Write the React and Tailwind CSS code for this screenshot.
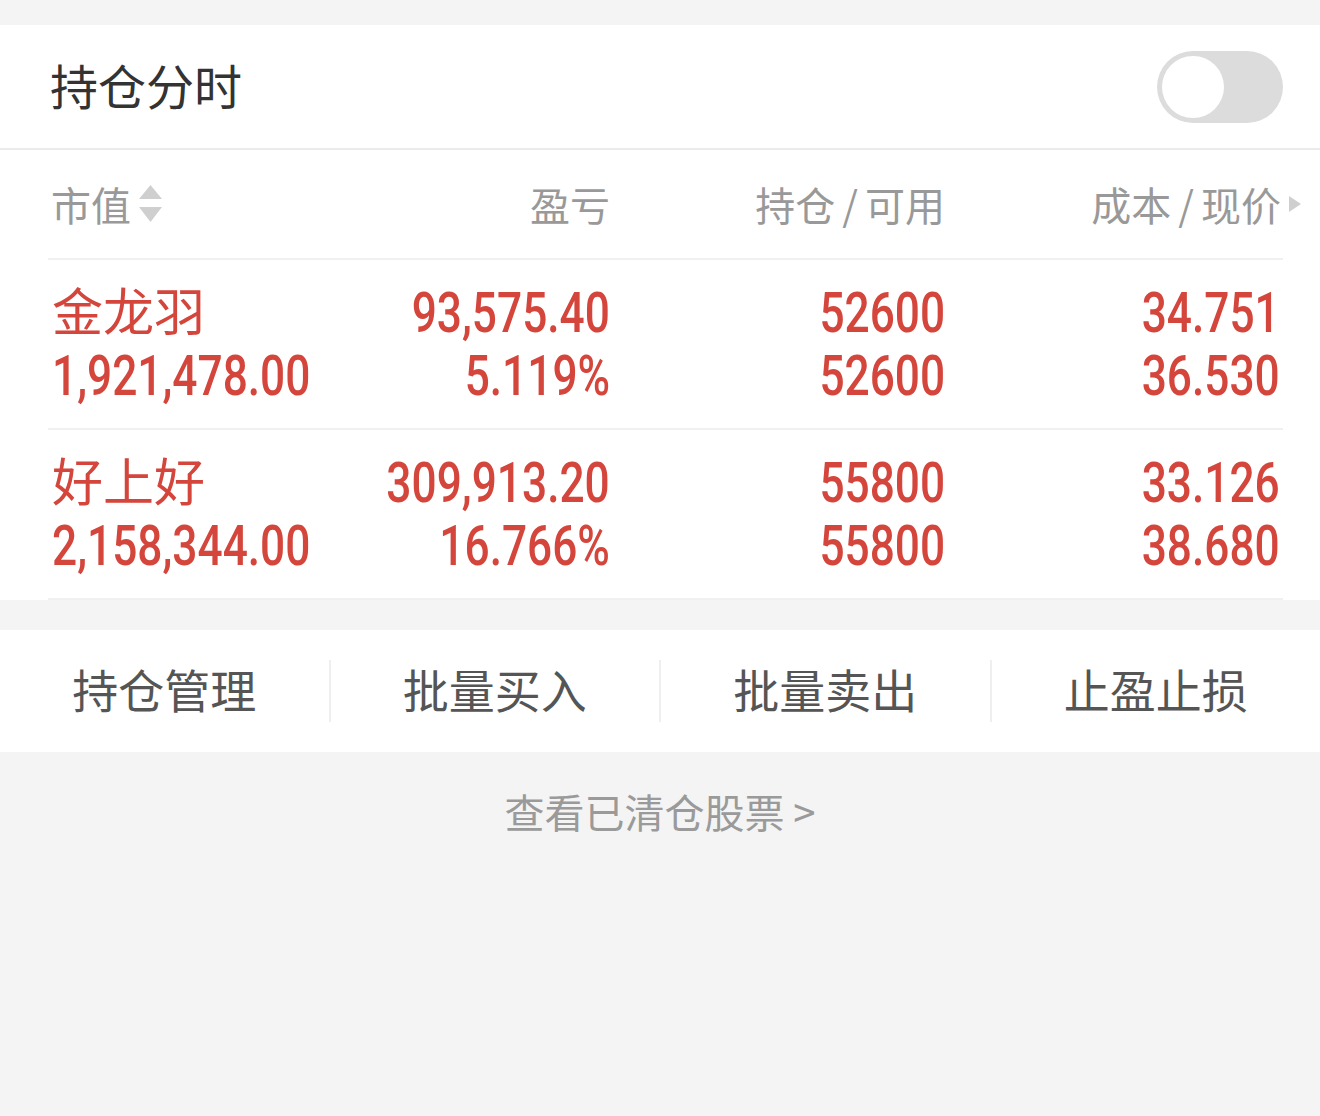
import React from 'react';

const cjk = { fontFamily: '"Noto Sans CJK SC", "Noto Sans", sans-serif' };
const num = { fontFamily: 'Roboto, "Liberation Sans", sans-serif' };

const positions = [
  {
    name: '金龙羽',
    value: '1,921,478.00',
    pnl: '93,575.40',
    pnlPct: '5.119%',
    hold: '52600',
    avail: '52600',
    cost: '34.751',
    price: '36.530',
  },
  {
    name: '好上好',
    value: '2,158,344.00',
    pnl: '309,913.20',
    pnlPct: '16.766%',
    hold: '55800',
    avail: '55800',
    cost: '33.126',
    price: '38.680',
  },
];

const actions = ['持仓管理', '批量买入', '批量卖出', '止盈止损'];

const Num = ({ children, left }) => (
  <div className={`flex h-[63px] ${left ? 'justify-start' : 'justify-end'}`}>
    <span
      style={num}
      className={`block text-[56px] font-medium leading-[63px] whitespace-nowrap scale-x-[0.79] ${left ? 'origin-left' : 'origin-right'}`}
    >
      {children}
    </span>
  </div>
);

const SortIcon = () => (
  <svg width="23" height="38" viewBox="0 0 23 38" className="ml-[8px]">
    <polygon points="11.5,0 23,14 0,14" fill="#cfcfcf" />
    <polygon points="0,22 23,22 11.5,37" fill="#cfcfcf" />
  </svg>
);

const cols = 'grid grid-cols-[300px_262px_335px_338px]';

const PositionRow = ({ p, last }) => (
  <div className={`${cols} pt-[22px] pb-[20px] border-t-2 border-[#f0f0f0] text-[#d4453c] ${last ? 'border-b-2' : ''}`}>
    <div className="pl-[4px]">
      <div style={cjk} className="text-[51px] leading-[63px] -mt-[4px] mb-[4px]">{p.name}</div>
      <Num left>{p.value}</Num>
    </div>
    <div>
      <Num>{p.pnl}</Num>
      <Num>{p.pnlPct}</Num>
    </div>
    <div>
      <Num>{p.hold}</Num>
      <Num>{p.avail}</Num>
    </div>
    <div className="pr-[3px]">
      <Num>{p.cost}</Num>
      <Num>{p.price}</Num>
    </div>
  </div>
);

export default function App() {
  return (
    <div className="min-h-screen bg-[#f4f4f4] pt-[25px]" style={cjk}>
      {/* Holdings panel */}
      <div className="bg-white">
        <div className="h-[125px] flex items-center justify-between pl-[50px] pr-[37px] border-b-2 border-[#ebebeb]">
          <h1 className="text-[48px] leading-none text-[#333333] -mt-[6px]">持仓分时</h1>
          <div className="w-[126px] h-[72px] rounded-full bg-[#dcdcdc] p-[5px]">
            <div className="w-[62px] h-[62px] rounded-full bg-white"></div>
          </div>
        </div>

        <div className="ml-[48px] mr-[37px]">
          {/* Column header */}
          <div className={`${cols} h-[108px] items-center text-[40px] text-[#999999]`}>
            <div className="pl-[3px] flex items-center">
              <span>市值</span>
              <SortIcon />
            </div>
            <div className="text-right">盈亏</div>
            <div className="text-right">
              持仓<span className="px-[7px]">/</span>可用
            </div>
            <div className="flex items-center justify-end -mr-[19px]">
              <span>成本<span className="px-[7px]">/</span>现价</span>
              <svg width="13" height="16" viewBox="0 0 13 16" className="ml-[8px]">
                <polygon points="0,0 12,8 0,16" fill="#cfcfcf" />
              </svg>
            </div>
          </div>

          {positions.map((p, i) => (
            <PositionRow key={p.name} p={p} last={i === positions.length - 1} />
          ))}
        </div>
      </div>

      {/* Action bar */}
      <div className="mt-[30px] bg-white h-[122px] flex items-center">
        {actions.map((a, i) => (
          <React.Fragment key={a}>
            {i > 0 && <div className="w-[2px] h-[62px] bg-[#efefef]"></div>}
            <div className="flex-1 text-center text-[46px] text-[#555555] -mt-[6px]">{a}</div>
          </React.Fragment>
        ))}
      </div>

      <div className="mt-[34px] text-center text-[40px] leading-[50px] text-[#9a9a9a]">
        查看已清仓股票 &gt;
      </div>
    </div>
  );
}
